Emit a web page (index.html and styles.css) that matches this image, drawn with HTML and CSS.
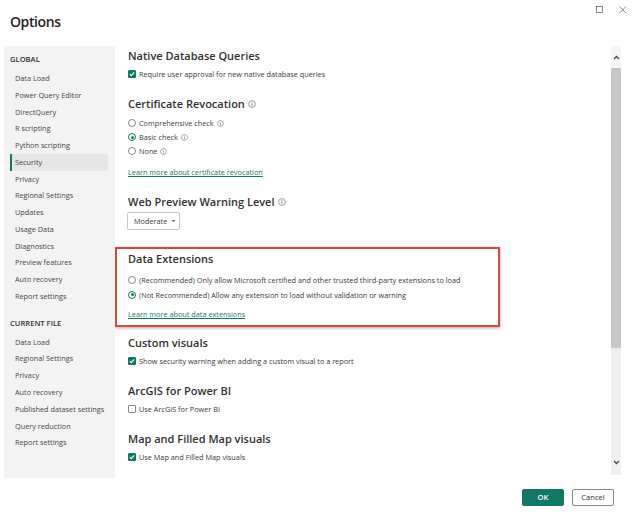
FILE: index.html
```html
<!DOCTYPE html>
<html>
<head>
<meta charset="utf-8">
<link rel="stylesheet" href="styles.css">
</head>
<body>
<div class="window">
  <header class="titlebar">
    <h1 class="title">Options</h1>
    <div class="controls">
      <svg class="ctl" width="8" height="8" viewBox="0 0 8 8"><rect x="0.5" y="0.5" width="6" height="6" fill="none" stroke="#666" stroke-width="0.8"/></svg>
      <svg class="ctl" width="8" height="8" viewBox="0 0 8 8"><path d="M0.5 0.5 L7 7 M7 0.5 L0.5 7" stroke="#666" stroke-width="0.8"/></svg>
    </div>
  </header>
  <div class="main">
    <nav class="sidebar">
      <div class="sec-head">GLOBAL</div>
      <div class="item">Data Load</div>
      <div class="item">Power Query Editor</div>
      <div class="item">DirectQuery</div>
      <div class="item">R scripting</div>
      <div class="item">Python scripting</div>
      <div class="item selected">Security</div>
      <div class="item">Privacy</div>
      <div class="item">Regional Settings</div>
      <div class="item">Updates</div>
      <div class="item">Usage Data</div>
      <div class="item">Diagnostics</div>
      <div class="item">Preview features</div>
      <div class="item">Auto recovery</div>
      <div class="item">Report settings</div>
      <div class="sec-head second">CURRENT FILE</div>
      <div class="item">Data Load</div>
      <div class="item">Regional Settings</div>
      <div class="item">Privacy</div>
      <div class="item">Auto recovery</div>
      <div class="item">Published dataset settings</div>
      <div class="item">Query reduction</div>
      <div class="item">Report settings</div>
    </nav>
    <section class="content">
      <div class="section first">
        <h2 class="heading">Native Database Queries</h2>
        <div class="row"><span class="cb on"><svg width="8" height="8" viewBox="0 0 8 8"><path d="M1.8 4.2 L3.3 5.6 L6.2 2.4" fill="none" stroke="#fff" stroke-width="1.1"/></svg></span>Require user approval for new native database queries</div>
      </div>
      <div class="section">
        <h2 class="heading">Certificate Revocation <span class="info big"><svg width="8" height="8" viewBox="0 0 8 8"><circle cx="4" cy="4" r="3.4" fill="none" stroke="#777" stroke-width="0.7"/><path d="M4 3.5 V6" stroke="#777" stroke-width="0.8"/><circle cx="4" cy="2.3" r="0.5" fill="#777"/></svg></span></h2>
        <div class="radios">
          <div class="row"><span class="rb"></span>Comprehensive check <span class="info"><svg width="7" height="7" viewBox="0 0 8 8"><circle cx="4" cy="4" r="3.4" fill="none" stroke="#777" stroke-width="0.7"/><path d="M4 3.5 V6" stroke="#777" stroke-width="0.8"/><circle cx="4" cy="2.3" r="0.5" fill="#777"/></svg></span></div>
          <div class="row"><span class="rb on"></span>Basic check <span class="info"><svg width="7" height="7" viewBox="0 0 8 8"><circle cx="4" cy="4" r="3.4" fill="none" stroke="#777" stroke-width="0.7"/><path d="M4 3.5 V6" stroke="#777" stroke-width="0.8"/><circle cx="4" cy="2.3" r="0.5" fill="#777"/></svg></span></div>
          <div class="row"><span class="rb"></span>None <span class="info"><svg width="7" height="7" viewBox="0 0 8 8"><circle cx="4" cy="4" r="3.4" fill="none" stroke="#777" stroke-width="0.7"/><path d="M4 3.5 V6" stroke="#777" stroke-width="0.8"/><circle cx="4" cy="2.3" r="0.5" fill="#777"/></svg></span></div>
        </div>
        <a class="link" href="#">Learn more about certificate revocation</a>
      </div>
      <div class="section">
        <h2 class="heading">Web Preview Warning Level <span class="info big"><svg width="8" height="8" viewBox="0 0 8 8"><circle cx="4" cy="4" r="3.4" fill="none" stroke="#777" stroke-width="0.7"/><path d="M4 3.5 V6" stroke="#777" stroke-width="0.8"/><circle cx="4" cy="2.3" r="0.5" fill="#777"/></svg></span></h2>
        <div class="dropdown">Moderate <svg width="5" height="4" viewBox="0 0 5 4"><path d="M0.5 1 L2.5 3 L4.5 1 Z" fill="#666"/></svg></div>
      </div>
      <div class="section highlight">
        <h2 class="heading">Data Extensions</h2>
        <div class="row tall"><span class="rb"></span>(Recommended) Only allow Microsoft certified and other trusted third-party extensions to load</div>
        <div class="row tall"><span class="rb on"></span>(Not Recommended) Allow any extension to load without validation or warning</div>
        <a class="link" href="#">Learn more about data extensions</a>
      </div>
      <div class="section after-hl">
        <h2 class="heading">Custom visuals</h2>
        <div class="row"><span class="cb on"><svg width="8" height="8" viewBox="0 0 8 8"><path d="M1.8 4.2 L3.3 5.6 L6.2 2.4" fill="none" stroke="#fff" stroke-width="1.1"/></svg></span>Show security warning when adding a custom visual to a report</div>
      </div>
      <div class="section">
        <h2 class="heading">ArcGIS for Power BI</h2>
        <div class="row"><span class="cb"></span>Use ArcGIS for Power BI</div>
      </div>
      <div class="section">
        <h2 class="heading">Map and Filled Map visuals</h2>
        <div class="row"><span class="cb on"><svg width="8" height="8" viewBox="0 0 8 8"><path d="M1.8 4.2 L3.3 5.6 L6.2 2.4" fill="none" stroke="#fff" stroke-width="1.1"/></svg></span>Use Map and Filled Map visuals</div>
      </div>
    </section>
    <div class="scrollbar">
      <div class="sb-btn"><svg width="7" height="5" viewBox="0 0 7 5"><path d="M1 4 L3.5 1.5 L6 4" fill="none" stroke="#444" stroke-width="1.3"/></svg></div>
      <div class="sb-thumb"></div>
      <div class="sb-track"></div>
      <div class="sb-btn down"><svg width="7" height="5" viewBox="0 0 7 5"><path d="M1 1 L3.5 3.5 L6 1" fill="none" stroke="#444" stroke-width="1.3"/></svg></div>
    </div>
  </div>
  <footer class="footer">
    <button class="btn primary">OK</button>
    <button class="btn">Cancel</button>
  </footer>
</div>
</body>
</html>
```

FILE: styles.css
```css
* { box-sizing: border-box; }
html, body { margin: 0; padding: 0; background: #fff; }
body {
  font-family: "Open Sans", "Noto Sans", sans-serif;
  color: #3b3a39;
  font-size: 7.3px;
}
.window { width: 635px; height: 514px; display: flex; flex-direction: column; overflow: hidden; }

.titlebar { height: 46px; display: flex; justify-content: space-between; align-items: flex-start; }
.title { margin: 0; padding: 12px 0 0 10px; font-size: 14px; font-weight: 600; letter-spacing: -0.4px; color: #252423; line-height: 20px; }
.controls { display: flex; gap: 15px; padding: 6px 8px 0 0; }
.ctl { display: block; }

.main { height: 432px; display: flex; padding-left: 4px; }
.sidebar { width: 111px; background: #f3f3f3; padding-top: 5px; flex: none; }
.sec-head { font-weight: 600; font-size: 7.6px; color: #323130; line-height: 16px; height: 16px; padding-left: 6px; margin-bottom: 3px; }
.sec-head.second { margin-top: 10px; }
.item { height: 16.77px; line-height: 16.77px; margin-left: 6px; width: 98px; padding-left: 5px; color: #484644; white-space: nowrap; }
.item.selected { background: #e6e6e6; border-left: 2px solid #117865; padding-left: 3px; }

.content { flex: 1; padding-left: 13px; padding-top: 3px; overflow: hidden; }
.section { margin-top: 16px; }
.section.first { margin-top: 0; }
.heading { margin: 0; font-size: 11px; font-weight: 600; color: #323130; line-height: 14px; height: 14px; white-space: nowrap; display: flex; align-items: center; }
.heading .info { margin-left: 3px; }
.row { display: flex; align-items: center; height: 14px; margin-top: 4px; white-space: nowrap; color: #3b3a39; }
.row.tall { height: 15px; margin-top: 0; }
.radios { margin-top: 5px; }
.radios .row { margin-top: 0; }
.info { display: inline-flex; margin-left: 3px; }
.info svg { display: block; }

.cb { width: 8px; height: 8px; border: 1px solid #8a8886; border-radius: 1px; margin-right: 3px; flex: none; display: flex; background: #fff; }
.cb.on { background: #117865; border-color: #117865; }
.cb svg { display: block; margin: -1px; }
.rb { width: 8px; height: 8px; border: 0.8px solid #8a8886; border-radius: 50%; margin-right: 3px; flex: none; background: #fff; position: relative; }
.rb.on { border-color: #117865; }
.rb.on::after { content: ""; position: absolute; left: 1.5px; top: 1.5px; width: 3.4px; height: 3.4px; border-radius: 50%; background: #117865; }

.link { display: block; margin-top: 7px; height: 14px; line-height: 14px; color: #117865; text-decoration: underline; font-size: 7.3px; }

.dropdown { margin-top: 3px; margin-left: -1px; width: 53px; height: 18px; border: 1px solid #c8c6c4; border-radius: 2px; display: flex; align-items: center; padding-left: 6px; gap: 4px; color: #3b3a39; }
.dropdown svg { display: block; }

.highlight { margin-top: 17px; margin-left: -13px; width: 385px; height: 80px; border: 2px solid #cf4a40; box-shadow: 0 1px 3px rgba(120,40,30,0.45); padding: 3px 0 0 11px; }
.highlight .heading { margin-bottom: 6px; }
.highlight .link { margin-top: 5px; }
.section.after-hl { margin-top: 9px; }

.scrollbar { width: 10px; margin-left: 0; margin-right: 14px; height: 429px; display: flex; flex-direction: column; background: #f0f0f0; flex: none; }
.sb-btn { height: 22px; display: flex; align-items: center; justify-content: center; background: #f5f5f5; }
.sb-btn svg { display: block; }
.sb-thumb { height: 280px; background: #c8c8c8; }
.sb-track { flex: 1; }
.sb-btn.down { height: 26px; background: #f0f0f0; }

.footer { flex: 1; display: flex; justify-content: flex-end; align-items: flex-start; padding: 11px 21px 0 0; gap: 8px; }
.btn { width: 42px; height: 17px; font-family: inherit; font-size: 7.6px; border: 1px solid #8a8886; border-radius: 2px; background: #fff; color: #323130; padding: 0; line-height: 15px; }
.btn.primary { background: #117865; border-color: #117865; color: #fff; font-weight: 600; }
```
